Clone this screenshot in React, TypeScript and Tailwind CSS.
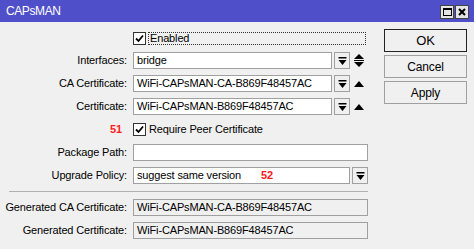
import React from 'react';

const font = { fontFamily: '"Liberation Sans", Arial, sans-serif' };

function DropIcon() {
  return (
    <svg width="9" height="8" viewBox="0 0 9 8">
      <rect x="0.5" y="0" width="8" height="1.5" fill="#000" />
      <polygon points="0.5,3 8.5,3 4.5,8" fill="#000" />
    </svg>
  );
}

function DropButton() {
  return (
    <div className="w-[16px] h-[17px] shrink-0 border border-[#a0a0a0] bg-[#f0f0f0] flex items-center justify-center">
      <DropIcon />
    </div>
  );
}

function UpArrow() {
  return (
    <svg width="10" height="6" viewBox="0 0 10 6">
      <polygon points="0,6 10,6 5,0" fill="#000" />
    </svg>
  );
}

function UpDownArrow() {
  return (
    <svg width="10" height="13" viewBox="0 0 10 13">
      <polygon points="0,5 10,5 5,0" fill="#000" />
      <rect x="0" y="6" width="10" height="1" fill="#000" />
      <polygon points="0,8 10,8 5,13" fill="#000" />
    </svg>
  );
}

function CheckBox() {
  return (
    <div className="w-[13px] h-[13px] shrink-0 border border-[#333] bg-white flex items-center justify-center">
      <svg width="9" height="9" viewBox="0 0 9 9">
        <path d="M1 4.5 L3.5 7 L8 1.5" stroke="#000" strokeWidth="1.8" fill="none" />
      </svg>
    </div>
  );
}

function Row({ label, children }: { label: React.ReactNode; children: React.ReactNode }) {
  return (
    <div className="flex items-center h-[17px]">
      <div className="w-[128px] shrink-0 text-right pr-[1px]">{label}</div>
      <div className="ml-[5px] w-[235px] flex items-center h-full">{children}</div>
    </div>
  );
}

function Input({ value, gray, children }: { value?: string; gray?: boolean; children?: React.ReactNode }) {
  return (
    <div
      className={`flex-1 h-[17px] border border-[#a0a0a0] ${gray ? 'bg-[#f0f0f0]' : 'bg-white'} flex items-center pl-[3px] whitespace-nowrap overflow-hidden`}
    >
      {value}
      {children}
    </div>
  );
}

export default function App() {
  return (
    <div style={font} className="w-[474px] h-[249px] bg-[#f0f0f0] text-[11px] tracking-[-0.15px] text-black overflow-hidden">
      <div className="h-[22px] bg-[#4f4fc9] flex items-center justify-between pl-[6px] pr-[5px]">
        <span className="text-white text-[12px] tracking-[-0.4px]">CAPsMAN</span>
        <div className="flex gap-[1px] mt-[2px]">
          <div className="w-[14px] h-[14px] bg-[#e4e4e4] border border-[#444] flex items-center justify-center">
            <div className="w-[9px] h-[8px] border border-black border-t-2" />
          </div>
          <div className="w-[14px] h-[14px] bg-[#e4e4e4] border border-[#444] flex items-center justify-center">
            <svg width="8" height="8" viewBox="0 0 8 8">
              <path d="M1 1 L7 7 M7 1 L1 7" stroke="#000" strokeWidth="2" />
            </svg>
          </div>
        </div>
      </div>

      <div className="flex">
        <div className="flex flex-col pt-[8px] gap-[6px]">
          <div className="flex items-center h-[17px] mb-[-1px]">
            <div className="w-[133px] shrink-0" />
            <CheckBox />
            <div className="ml-[2px] h-[13px] w-[218px] border border-dotted border-[#333] flex items-center pl-[1px]">
              Enabled
            </div>
          </div>

          <Row label="Interfaces:">
            <Input value="bridge" />
            <div className="ml-[2px]"><DropButton /></div>
            <div className="w-[18px] flex justify-center"><UpDownArrow /></div>
          </Row>

          <Row label="CA Certificate:">
            <Input value="WiFi-CAPsMAN-CA-B869F48457AC" />
            <div className="ml-[2px]"><DropButton /></div>
            <div className="w-[18px] flex justify-center"><UpArrow /></div>
          </Row>

          <Row label="Certificate:">
            <Input value="WiFi-CAPsMAN-B869F48457AC" />
            <div className="ml-[2px]"><DropButton /></div>
            <div className="w-[18px] flex justify-center"><UpArrow /></div>
          </Row>

          <div className="flex items-center h-[17px]">
            <div className="w-[133px] shrink-0 pl-[110px]">
              <span className="text-[#ff1a1a] font-bold text-[11px] tracking-normal">51</span>
            </div>
            <CheckBox />
            <span className="ml-[3px]">Require Peer Certificate</span>
          </div>

          <Row label="Package Path:">
            <Input />
          </Row>

          <Row label="Upgrade Policy:">
            <Input>
              <span>suggest same version</span>
              <span className="ml-[20px] text-[#ff1a1a] font-bold tracking-normal">52</span>
            </Input>
            <div className="ml-[2px]"><DropButton /></div>
          </Row>

          <div className="ml-[9px] w-[359px] h-px bg-[#b0b0b0] my-[1px]" />

          <Row label="Generated CA Certificate:">
            <Input gray value="WiFi-CAPsMAN-CA-B869F48457AC" />
          </Row>

          <Row label="Generated Certificate:">
            <Input gray value="WiFi-CAPsMAN-B869F48457AC" />
          </Row>
        </div>

        <div className="ml-[16px] pt-[7px] flex flex-col gap-[3px]">
          <div className="w-[83px] h-[23px] border border-[#222] bg-[#f0f0f0] flex items-center justify-center text-[13px]">OK</div>
          <div className="w-[83px] h-[23px] border border-[#a0a0a0] bg-[#f0f0f0] flex items-center justify-center text-[12px]">Cancel</div>
          <div className="w-[83px] h-[23px] border border-[#a0a0a0] bg-[#f0f0f0] flex items-center justify-center text-[12px]">Apply</div>
        </div>
      </div>
    </div>
  );
}
